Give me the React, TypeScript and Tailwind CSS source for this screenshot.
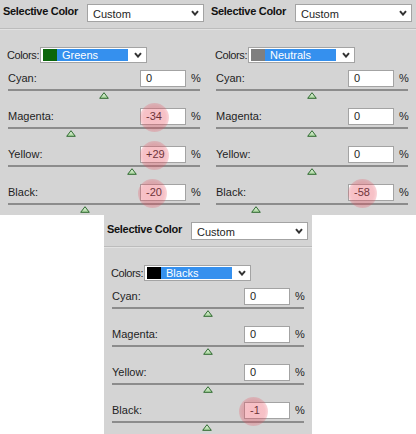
import React from "react";

type Row = { name: string; value: number; hl?: number };
type PanelData = { color: string; swatch: string; rows: Row[]; extraTop?: boolean };

const panels: PanelData[] = [
  {
    color: "Greens",
    swatch: "#0c660c",
    rows: [
      { name: "Cyan", value: 0 },
      { name: "Magenta", value: -34, hl: -1 },
      { name: "Yellow", value: 29, hl: -1 },
      { name: "Black", value: -20, hl: -3 },
    ],
  },
  {
    color: "Neutrals",
    swatch: "#7f7f7f",
    rows: [
      { name: "Cyan", value: 0 },
      { name: "Magenta", value: 0 },
      { name: "Yellow", value: 0 },
      { name: "Black", value: -58, hl: -1 },
    ],
  },
  {
    color: "Blacks",
    swatch: "#000000",
    extraTop: true,
    rows: [
      { name: "Cyan", value: 0 },
      { name: "Magenta", value: 0 },
      { name: "Yellow", value: 0 },
      { name: "Black", value: -1, hl: -6 },
    ],
  },
];

const font = { fontFamily: '"Liberation Sans", Arial, sans-serif' };

function Chevron() {
  return (
    <svg width="8" height="6" viewBox="0 0 8 6" className="shrink-0">
      <polyline points="1,1.2 4,4.6 7,1.2" fill="none" stroke="#333333" strokeWidth="2" />
    </svg>
  );
}

function Thumb() {
  return (
    <svg width="10" height="7" viewBox="0 0 10 7">
      <defs>
        <linearGradient id="tg" x1="0" y1="0" x2="0" y2="1">
          <stop offset="0" stopColor="#eef8ea" />
          <stop offset="1" stopColor="#9fd193" />
        </linearGradient>
      </defs>
      <polygon points="5,0.7 9.3,6.3 0.7,6.3" fill="url(#tg)" stroke="#2f6a30" strokeWidth="1" strokeLinejoin="round" />
    </svg>
  );
}

function fmt(v: number) {
  if (v > 0) return "+" + v;
  return String(v);
}

function Panel({ data }: { data: PanelData }) {
  return (
    <div
      className={`w-[208px] bg-[#d4d4d4] text-[11px] text-[#1e1e1e] flex flex-col ${
        data.extraTop ? "h-[219px] pt-[3px]" : "h-[215px]"
      }`}
      style={font}
    >
      {/* header */}
      <div className="h-[28px] flex items-start pl-[3px] pr-[4px] shrink-0">
        <div className="mt-[4px] leading-[14px] font-bold tracking-[-0.3px] text-[#111]">Selective Color</div>
        <div className="ml-auto mt-[4px] w-[117px] h-[18px] bg-white border border-[#a3a3a3] flex items-center pl-[5px] pr-[4px]">
          <span className="leading-[14px] mt-[1px]">Custom</span>
          <span className="ml-auto">
            <Chevron />
          </span>
        </div>
      </div>
      <div className="h-px bg-[#bcbcbc] shrink-0" />
      <div className="h-px bg-[#e2e2e2] shrink-0" />

      {/* colors row */}
      <div className="mt-[17px] flex items-center pl-[7px] h-[16px] shrink-0">
        <span className="w-[33px] whitespace-nowrap tracking-[-0.4px]">Colors:</span>
        <div className="w-[107px] h-[16px] bg-white border border-[#a3a3a3] flex items-center py-[1px] pl-[2px] pr-[4px]">
          <div className="w-[14px] h-[12px]" style={{ backgroundColor: data.swatch }} />
          <div className="w-[71px] h-[12px] bg-[#3590ee] text-white leading-[12px] pl-[5px]">{data.color}</div>
          <span className="ml-auto">
            <Chevron />
          </span>
        </div>
      </div>

      {/* adjustment rows */}
      <div className="mt-[7px] px-[8px] flex flex-col gap-[9px]">
        {data.rows.map((r) => (
          <div key={r.name} className="flex flex-col">
            <div className="flex items-center h-[17px]">
              <span className="flex-1">{r.name}:</span>
              <div className="relative w-[46px] h-[17px] bg-white border border-[#a3a3a3] pl-[5px] leading-[15px]">
                {fmt(r.value)}
                {r.hl !== undefined && (
                  <div
                    className="absolute top-[-6px] w-[29px] h-[29px] rounded-full pointer-events-none"
                    style={{
                      left: r.hl,
                      background:
                        "radial-gradient(circle, rgba(232,80,96,0.38) 0%, rgba(232,80,96,0.35) 55%, rgba(232,80,96,0.18) 80%, rgba(232,80,96,0) 100%)",
                    }}
                  />
                )}
              </div>
              <span className="w-[14px] pl-[5px]">%</span>
            </div>
            <div className="mt-[2px] h-[2px] bg-[#8c8c8c]" />
            <div className="relative mt-[2px] h-[6px]">
              <div className="absolute top-[-1px]" style={{ left: 96 + r.value * 0.96 - 5 }}>
                <Thumb />
              </div>
            </div>
          </div>
        ))}
      </div>
    </div>
  );
}

export default function App() {
  return (
    <div className="w-[416px] h-[434px] bg-white overflow-hidden">
      <div className="flex">
        <Panel data={panels[0]} />
        <Panel data={panels[1]} />
      </div>
      <div className="ml-[104px]">
        <Panel data={panels[2]} />
      </div>
    </div>
  );
}
